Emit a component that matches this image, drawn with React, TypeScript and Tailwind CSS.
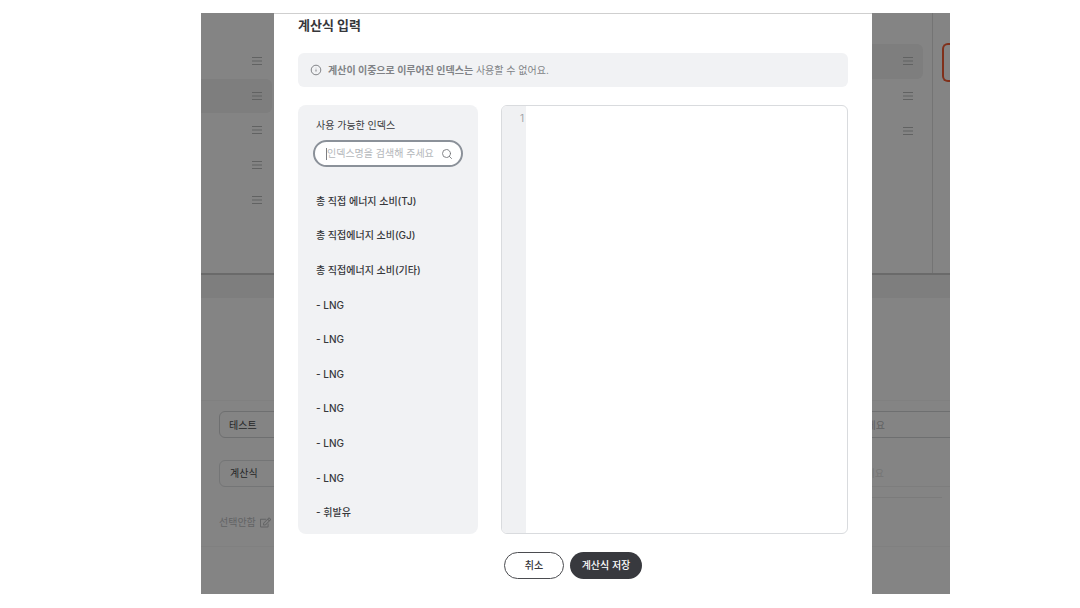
import { useState } from 'react'
import { Search } from 'lucide-react'
import { FaRegEdit } from 'react-icons/fa'

interface IndexItem {
  id: number
  name: string
}

const INDEX_ITEMS: IndexItem[] = [
  { id: 1, name: '총 직접 에너지 소비(TJ)' },
  { id: 2, name: '총 직접에너지 소비(GJ)' },
  { id: 3, name: '총 직접에너지 소비(기타)' },
  { id: 4, name: '- LNG' },
  { id: 5, name: '- LNG' },
  { id: 6, name: '- LNG' },
  { id: 7, name: '- LNG' },
  { id: 8, name: '- LNG' },
  { id: 9, name: '- LNG' },
  { id: 10, name: '- 휘발유' },
]

function DragHandle() {
  return (
    <svg className="h-2.5 w-2.5" viewBox="0 0 10 10" stroke="#616262" strokeWidth="1.2" aria-hidden="true">
      <path d="M0 1.5h10M0 5h10M0 8.5h10" />
    </svg>
  )
}

function NoticeIcon() {
  return (
    <svg className="mr-1.5 size-3 shrink-0" viewBox="0 0 12 12" fill="none" aria-hidden="true">
      <circle cx="6" cy="6" r="4.8" stroke="#828488" strokeWidth="1" />
      <path d="M6 3.6v1" stroke="#c9cbce" strokeWidth="1" />
      <path d="M6 5.6v2" stroke="#85878b" strokeWidth="1.1" />
    </svg>
  )
}

// rows of draggable items, one of them selected
function HandleList({ count, selected }: { count: number; selected: number }) {
  return (
    <>
      {Array.from({ length: count }, (_, i) => (
        <li
          key={i}
          className={`flex items-center justify-end rounded-r-md pr-2.5 ${i === selected ? 'bg-[#7e7e7e]' : ''}`}
        >
          <DragHandle />
        </li>
      ))}
    </>
  )
}

function PageBehind() {
  return (
    <div className="col-start-1 row-start-1 flex min-w-0 flex-col bg-[#848484] text-[10px]">
      <div className="flex h-[262px] justify-between border-b-2 border-[#6a6a6a]">
        <ul className="grid h-[204px] w-[71px] grid-rows-5 pt-[31px]">
          <HandleList count={5} selected={1} />
        </ul>
        <div className="flex">
          <ul className="grid h-[135px] w-[120px] grid-rows-3 pt-[31px]">
            <HandleList count={3} selected={0} />
          </ul>
          <div className="ml-[9px] border-l border-[#747474] pt-[30px] pl-[9px]">
            <div className="h-[39px] w-2 rounded-l-md border-2 border-r-0 border-[#80301a]" />
          </div>
        </div>
      </div>
      <div className="h-[23px] bg-[#7e7e7e]" />

      <div className="mt-[102px] border-y border-[#808080] pt-2.5 pl-[18px]">
        <div className="flex">
          <input
            aria-label="인덱스명"
            defaultValue="테스트"
            className="h-[27px] w-[200px] rounded-md border border-[#6e6f70] pl-[9px] text-[#252627]"
          />
          <input
            aria-label="설명"
            placeholder="설명을 입력해 주세요"
            className="ml-4 h-[27px] min-w-0 flex-1 rounded-l-md border border-r-0 border-[#6e6f70] pr-[65px] text-right placeholder:text-[#5f6061]"
          />
        </div>
        <div className="mt-[22px] flex">
          <select
            aria-label="입력 방식"
            className="h-[27px] w-[200px] appearance-none rounded-md border border-[#747576] pl-2.5 text-[#252627]"
          >
            <option>계산식</option>
          </select>
          <input
            aria-label="단위"
            disabled
            placeholder="단위를 입력해 주세요"
            className="ml-4 h-[27px] min-w-0 flex-1 border-b border-[#7d7d7d] pr-[66px] text-right placeholder:text-[#747575]"
          />
        </div>
        <div className="mt-2.5 mr-2 ml-[63px] border-t border-[#7b7b7b]" />
        <div className="mt-3.5 mb-3.5 flex h-5 items-center gap-1 text-[#626364]">
          <span>선택안함</span>
          <FaRegEdit className="size-[11px]" />
        </div>
      </div>
    </div>
  )
}

function FormulaDialog() {
  const [keyword, setKeyword] = useState('')
  const [formula, setFormula] = useState('')

  const items = INDEX_ITEMS.filter(item => item.name.includes(keyword))

  return (
    <section
      role="dialog"
      aria-labelledby="formula-title"
      className="z-10 col-start-1 row-start-1 mr-[78px] ml-[73px] min-w-0 border-t border-[#cfcfcf] bg-white px-6 pt-px pb-[15px] text-[10px] text-[#36373b]"
    >
      <h2 id="formula-title" className="text-[13px] leading-5 font-bold">계산식 입력</h2>

      <div className="mt-[18px] flex h-[34px] items-center rounded-md bg-[#f1f2f4] px-3 text-[#808286]">
        <NoticeIcon />
        <p>
          <strong className="font-bold">계산이 이중으로 이루어진 인덱스는</strong> 사용할 수 없어요.
        </p>
      </div>

      <div className="mt-[18px] flex gap-[23px]">
        <div className="w-[180px] shrink-0 rounded-lg bg-[#f1f2f4] px-[15px] pt-2.5 pb-1">
          <label htmlFor="index-search" className="block pl-[3px] leading-5">
            사용 가능한 인덱스
          </label>
          <div className="mt-[5px] flex h-[27px] items-center rounded-full border-2 border-[#8b9199] bg-white pr-2 pl-[11px]">
            <span className="h-3 w-px bg-[#7d7f83]" />
            <input
              id="index-search"
              value={keyword}
              onChange={e => setKeyword(e.target.value)}
              placeholder="인덱스명을 검색해 주세요"
              className="min-w-0 flex-1 outline-none placeholder:text-[#b4b7bb]"
            />
            <Search className="size-3 shrink-0 text-[#77797d]" strokeWidth={1.8} />
          </div>
          <ul className="mt-[17px] grid h-[346px] grid-rows-10">
            {items.map(item => (
              <li key={item.id} className="flex items-center pl-[3px] font-medium">
                <button type="button">{item.name}</button>
              </li>
            ))}
          </ul>
        </div>

        <div className="flex min-w-0 flex-1 overflow-hidden rounded-md border border-[#d9dbde]">
          <div className="w-6 bg-[#f0f1f3] pt-1 pr-0.5 text-right leading-4 text-[#a0a2a6]">1</div>
          <textarea
            aria-label="계산식"
            value={formula}
            onChange={e => setFormula(e.target.value)}
            className="min-w-0 flex-1 resize-none px-1 pt-1 leading-4 outline-none"
          />
        </div>
      </div>

      <div className="mt-[18px] flex justify-center gap-1.5 font-medium">
        <button type="button" className="h-[27px] w-[60px] rounded-full border border-[#4b4c50]">
          취소
        </button>
        <button type="button" className="h-[27px] w-[72px] rounded-full bg-[#38393e] text-white">
          계산식 저장
        </button>
      </div>
    </section>
  )
}

export default function App() {
  return (
    <main className="min-h-screen bg-white pt-[13px] pr-[130px] pl-[201px] font-['Inter','Noto_Sans_CJK_KR',sans-serif]">
      <div className="grid grid-cols-1 overflow-hidden">
        <PageBehind />
        <FormulaDialog />
      </div>
    </main>
  )
}
